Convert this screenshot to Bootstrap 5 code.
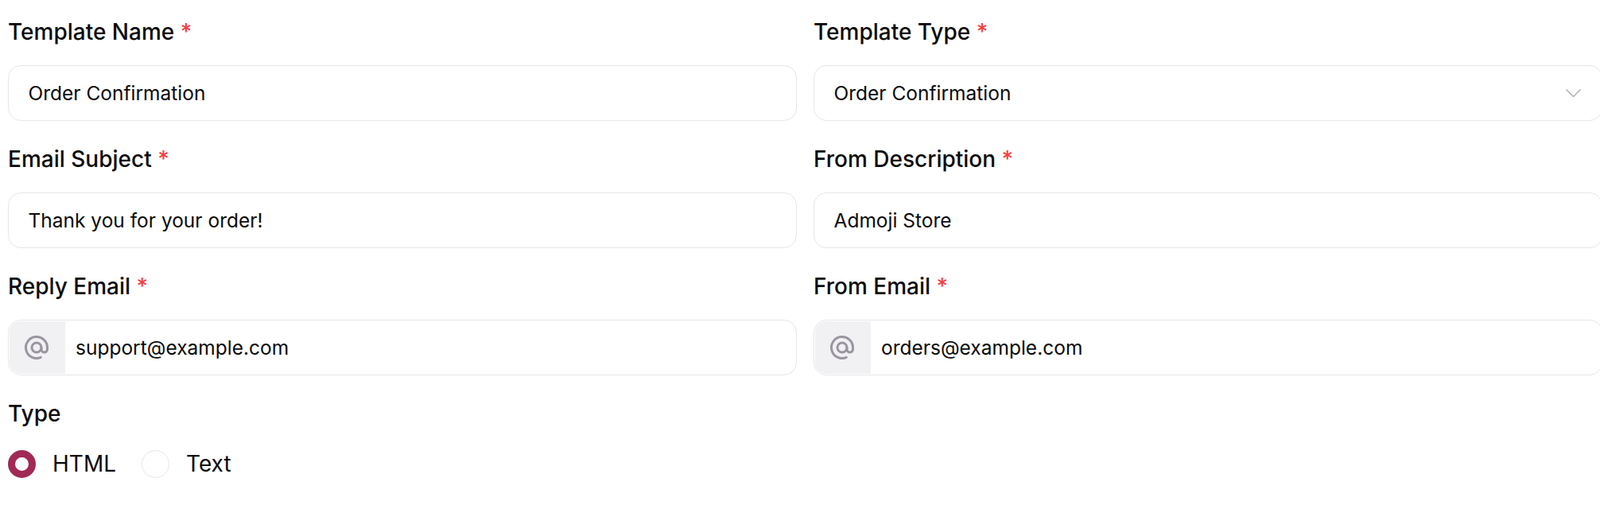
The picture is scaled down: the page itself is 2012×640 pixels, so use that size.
<!DOCTYPE html>
<html lang="en">
<head>
<meta charset="utf-8">
<title>Template form</title>
<link href="https://cdn.jsdelivr.net/npm/bootstrap@5.3.0/dist/css/bootstrap.min.css" rel="stylesheet">
<style>
html,body{background:#fff;overflow:hidden}
body{font-family:"Inter","Liberation Sans",sans-serif;color:#0a0a0a;height:640px}
.tpl-page{padding:20px 0 0 10px;width:2015px}
.tpl-row{--bs-gutter-x:21px;--bs-gutter-y:0;margin-left:-10.5px;margin-right:-10.5px}
.tpl-field{margin-bottom:28px}
.tpl-label{display:block;font-size:28px;line-height:40px;font-weight:500;color:#0a0a0a;margin-bottom:22px}
.tpl-label-type{margin-bottom:25px}
.tpl-req{color:#f43f3f}
.tpl-control.form-control,.tpl-control.form-select{height:70px;font-size:24.5px;line-height:32px;color:#0a0a0a;border:1.4px solid #e7e7e7;border-radius:16px;padding:0 24.5px;box-shadow:none;background-color:#fff}
.tpl-control.form-select{background-image:url("data:image/svg+xml,%3Csvg xmlns='http://www.w3.org/2000/svg' viewBox='0 0 19 10'%3E%3Cpath d='M.5.5 9.5 9.5 18.5.5' fill='none' stroke='%23a9a5ae' stroke-width='1.3'/%3E%3C/svg%3E");background-size:19px 10px;background-position:right 26.5px center;padding-right:60px}
.tpl-group{height:70px;border:1.4px solid #e7e7e7;border-radius:16px;padding:1px;flex-wrap:nowrap;overflow:hidden;background:#fff}
.tpl-addon.input-group-text{width:70px;border:0;border-radius:14px 0 0 14px;background:#f1f0f3;padding:0;justify-content:center}
.tpl-addon svg{width:36px;height:36px;display:block;margin-right:1.5px}
.tpl-group .form-control{border:0;font-size:24.5px;color:#0a0a0a;padding:0 14px;box-shadow:none;background:transparent}
.tpl-radios{display:flex;align-items:center;gap:32px}
.tpl-radio.form-check{display:flex;align-items:center;gap:21px;padding:0;margin:0;min-height:0}
.tpl-radio .form-check-input{width:35px;height:35px;margin:0;float:none;border:1.4px solid #e7e7e7;background-color:#fff;box-shadow:none;background-image:none;flex:none}
.tpl-radio .form-check-input:checked{border:9px solid #a02a55;background-color:#fff;background-image:none}
.tpl-radio .form-check-label{font-size:28px;line-height:36px;color:#0a0a0a}
</style>
</head>
<body>
<form class="tpl-page">
  <div class="row tpl-row">
    <div class="col-6 tpl-field">
      <label class="tpl-label" for="f1">Template Name <span class="tpl-req">*</span></label>
      <input id="f1" class="form-control tpl-control" type="text" value="Order Confirmation">
    </div>
    <div class="col-6 tpl-field">
      <label class="tpl-label" for="f2">Template Type <span class="tpl-req">*</span></label>
      <select id="f2" class="form-select tpl-control"><option>Order Confirmation</option></select>
    </div>
    <div class="col-6 tpl-field">
      <label class="tpl-label" for="f3">Email Subject <span class="tpl-req">*</span></label>
      <input id="f3" class="form-control tpl-control" type="text" value="Thank you for your order!">
    </div>
    <div class="col-6 tpl-field">
      <label class="tpl-label" for="f4">From Description <span class="tpl-req">*</span></label>
      <input id="f4" class="form-control tpl-control" type="text" value="Admoji Store">
    </div>
    <div class="col-6 tpl-field">
      <label class="tpl-label" for="f5">Reply Email <span class="tpl-req">*</span></label>
      <div class="input-group tpl-group">
        <span class="input-group-text tpl-addon"><svg viewBox="0 0 24 24" fill="none" stroke="#9a95a0" stroke-width="2" stroke-linecap="round" stroke-linejoin="round"><circle cx="12" cy="12" r="4"/><path d="M16 12v1.5a2.5 2.5 0 0 0 5 0v-1.5a9 9 0 1 0-5.5 8.28"/></svg></span>
        <input id="f5" class="form-control" type="text" value="support@example.com">
      </div>
    </div>
    <div class="col-6 tpl-field">
      <label class="tpl-label" for="f6">From Email <span class="tpl-req">*</span></label>
      <div class="input-group tpl-group">
        <span class="input-group-text tpl-addon"><svg viewBox="0 0 24 24" fill="none" stroke="#9a95a0" stroke-width="2" stroke-linecap="round" stroke-linejoin="round"><circle cx="12" cy="12" r="4"/><path d="M16 12v1.5a2.5 2.5 0 0 0 5 0v-1.5a9 9 0 1 0-5.5 8.28"/></svg></span>
        <input id="f6" class="form-control" type="text" value="orders@example.com">
      </div>
    </div>
    <div class="col-12">
      <div class="tpl-label tpl-label-type">Type</div>
      <div class="tpl-radios">
        <div class="form-check tpl-radio"><input id="r1" class="form-check-input" type="radio" name="t" checked><label class="form-check-label" for="r1">HTML</label></div>
        <div class="form-check tpl-radio"><input id="r2" class="form-check-input" type="radio" name="t"><label class="form-check-label" for="r2">Text</label></div>
      </div>
    </div>
  </div>
</form>
<script src="https://cdn.jsdelivr.net/npm/bootstrap@5.3.0/dist/js/bootstrap.bundle.min.js"></script>
</body>
</html>
